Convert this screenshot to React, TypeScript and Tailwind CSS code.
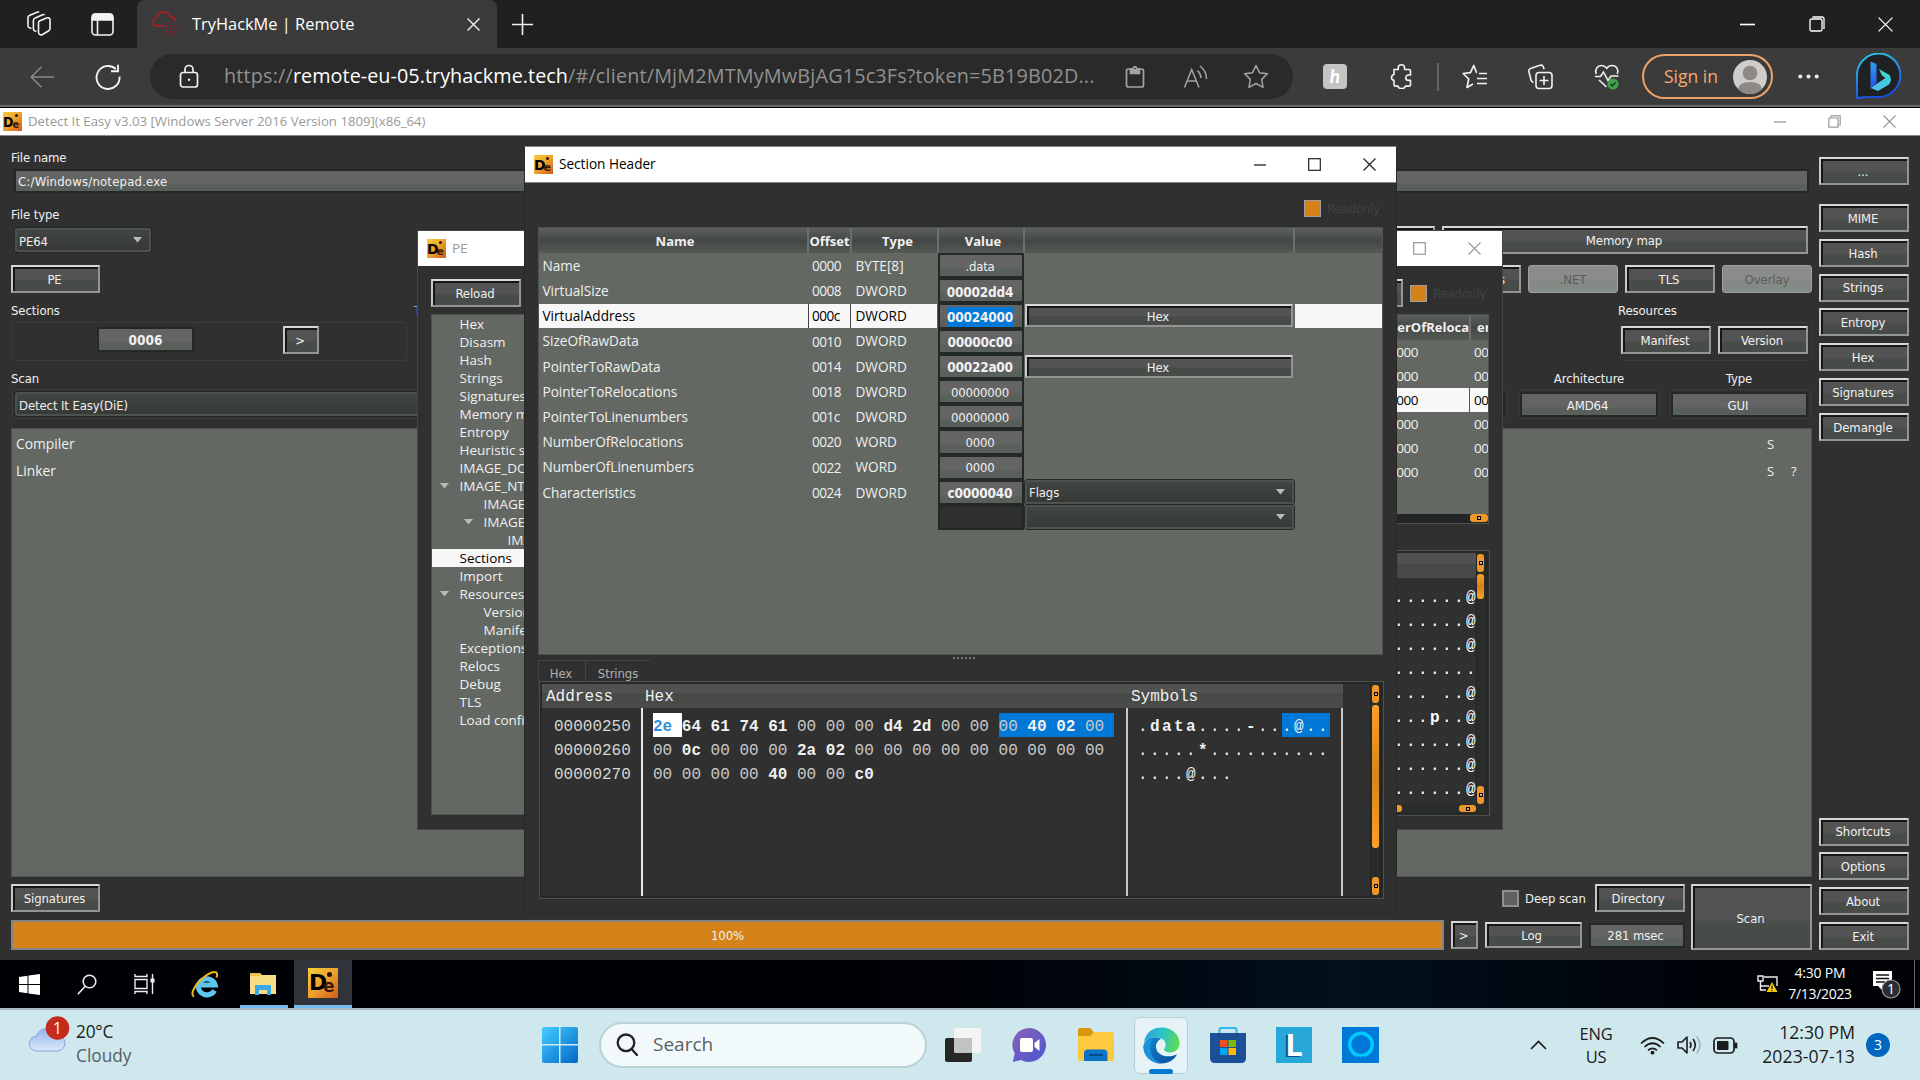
import React, { type ReactNode } from "react";

const TAHOMA = "font-['DejaVu_Sans_Condensed','DejaVu_Sans',sans-serif] [font-stretch:condensed] text-[13px] tracking-[-0.1px]";
const SEGOE = "font-['Open_Sans','Noto_Sans',sans-serif] [font-stretch:normal] tracking-[0px]";
const MONO = "font-['Liberation_Mono',monospace] text-[16px]";

function Btn({ children, className = "" }: { children?: ReactNode; className?: string }) {
  return (
    <div
      className={`${TAHOMA} flex shrink-0 items-center justify-center overflow-hidden border-2 border-t-[#d8d8d8] border-l-[#c8c8c8] border-r-[#949494] border-b-[#949494] bg-linear-to-b from-[#535353] from-50% to-[#484c49] to-60% pt-[1px] pr-[2px] text-[#f0f0f0] shadow-[inset_2px_2px_0_#161616] ${className}`}
    >
      {children}
    </div>
  );
}

function DisabledBtn({ children, className = "" }: { children?: ReactNode; className?: string }) {
  return (
    <div className={`${TAHOMA} flex shrink-0 items-center justify-center rounded-[3px] border border-[#a0a0a0] bg-linear-to-b from-[#8c8c8c] from-50% to-[#848a86] to-60% pt-[1px] text-[#5c5c5c] ${className}`}>
      {children}
    </div>
  );
}

function Field({ children, className = "" }: { children?: ReactNode; className?: string }) {
  return (
    <div className={`${TAHOMA} flex shrink-0 items-center border-2 border-[#232a26] bg-linear-to-b from-[#646464] from-55% to-[#59605b] to-70% pt-[2px] text-[#f0f0f0] ${className}`}>
      {children}
    </div>
  );
}

function Combo({ children, className = "" }: { children?: ReactNode; className?: string }) {
  return (
    <div className={`${TAHOMA} flex shrink-0 items-center justify-between rounded-[3px] border-2 border-[#4c524e] bg-linear-to-b from-[#424643] to-[#363936] px-[2px] text-[#f0f0f0] shadow-[0_0_0_1px_#252826] ${className}`}>
      <span className="pt-[3px]">{children}</span>
      <Triangle className="mr-[5px]" />
    </div>
  );
}

function Triangle({ className = "" }: { className?: string }) {
  return (
    <svg className={className} width="9" height="6" viewBox="0 0 9 6">
      <path d="M0 0h9L4.5 5.5z" fill="#b9bbb9" />
    </svg>
  );
}

function Group({ children, className = "" }: { children?: ReactNode; className?: string }) {
  return <div className={`flex shrink-0 rounded-[2px] border border-[#3a3c3a] ${className}`}>{children}</div>;
}

function DieIcon({ big = false }: { big?: boolean }) {
  return (
    <div className={`relative shrink-0 overflow-hidden bg-linear-to-br from-[#f4cf3a] via-[#eda12c] to-[#cf5a1c] ${big ? "h-[30px] w-[30px]" : "h-[19px] w-[19px]"}`}>
      <span className={`absolute font-['DejaVu_Sans',sans-serif] leading-none font-bold text-black ${big ? "top-[4px] left-[1px] text-[22px]" : "top-[3px] left-0 text-[14px]"}`}>D</span>
      <span className={`absolute font-['DejaVu_Sans',sans-serif] leading-none font-bold text-[#3a1606] ${big ? "top-[10px] left-[15px] text-[17px]" : "top-[7px] left-[9.5px] text-[11px]"}`}>e</span>
      <span className={`absolute rounded-full bg-[#2a1208] ${big ? "top-[4px] left-[19px] h-[5px] w-[5px]" : "top-[2px] left-[12px] h-[3px] w-[3px]"}`} />
    </div>
  );
}

function MinIcon({ color, size = 12 }: { color: string; size?: number }) {
  return (
    <svg width={size} height={size} viewBox="0 0 12 12">
      <path d="M0 6h12" stroke={color} strokeWidth="1.3" />
    </svg>
  );
}
function MaxIcon({ color, size = 13 }: { color: string; size?: number }) {
  return (
    <svg width={size} height={size} viewBox="0 0 13 13" fill="none">
      <rect x="0.7" y="0.7" width="11.6" height="11.6" stroke={color} strokeWidth="1.2" />
    </svg>
  );
}
function RestoreIcon({ color, size = 13 }: { color: string; size?: number }) {
  return (
    <svg width={size} height={size} viewBox="0 0 13 13" fill="none" stroke={color} strokeWidth="1.2">
      <path d="M.8 3h9.2v9.2H.8zM3 3V.8h9.2V10H10" />
    </svg>
  );
}
function CloseIcon({ color, size = 13, w = 1.2 }: { color: string; size?: number; w?: number }) {
  return (
    <svg width={size} height={size} viewBox="0 0 13 13">
      <path d="M.5.5l12 12M12.5.5l-12 12" stroke={color} strokeWidth={w} />
    </svg>
  );
}

function TabStrip() {
  return (
    <div className="flex h-[48px] items-center bg-[#202020]">
      <div className="flex w-[137px] items-center pl-[26px]">
        <svg width="26" height="26" viewBox="0 0 26 26" fill="none" stroke="#f2f2f2" strokeWidth="1.6" strokeLinejoin="round">
          <path d="M13.5 10 20.5 7q1.5-.6 2.500 0t1 2v8.500q0 1.500-1.300 2.200L16.500 23.500q-1.500.8-2.700.1T12.500 21.500V12q0-1.400 1-2z" />
          <path d="M10.500 20.200 9 20q-1.600-.5-1.600-2.200V9.500q0-1.600 1.300-2.200L16.500 3.800q1.200-.5 2.200 0" />
          <path d="M5.400 17.500 4 17q-2-.5-2-2.200V6.600q0-1.600 1.300-2.200L11 1.300q1.200-.5 2.200 0" />
        </svg>
        <svg className="ml-[39px]" width="23" height="23" viewBox="0 0 23 23" fill="none" stroke="#f2f2f2" strokeWidth="1.6">
          <rect x="1" y="1" width="21" height="21" rx="3.5" />
          <path d="M1.500 2.500Q2 1 4 1h15q2 0 2.500 1.500V7h-20z" fill="#f2f2f2" />
          <path d="M6.500 7v15" />
        </svg>
      </div>
      <div className={`${SEGOE} flex h-[48px] w-[360px] items-center rounded-t-[8px] bg-[#3b3b3b] pl-[15px] text-[16.4px] text-white`}>
        <svg width="27" height="26" viewBox="0 0 27 26" fill="none">
          <path d="M12 15H5.500C2.500 15 1 13 1 10.500S3 6.500 5 6.500C5.500 3 8 1 11.500 1S17 3 18 6c3-.4 5.500 1.500 5.500 4" stroke="#c4161c" strokeWidth="1.5" />
          <path d="M14 12h4m2 0h4M14 15h2m2 0h6M13 18h3m2 0h3m2 0h2M14 21h5m2 0h3M16 24h2m2 0h4" stroke="#8e1f24" strokeWidth="1.5" strokeDasharray="2 1" />
        </svg>
        <span className="ml-[13px] flex-1">TryHackMe | Remote</span>
        <span className="mr-[17px]"><CloseIcon color="#f2f2f2" w={1.4} /></span>
      </div>
      <svg className="ml-[15px]" width="21" height="21" viewBox="0 0 21 21">
        <path d="M10.500 0v21M0 10.500h21" stroke="#f2f2f2" strokeWidth="1.6" />
      </svg>
      <div className="flex-1" />
      <MinIcon color="#fff" size={15} />
      <svg className="ml-[54px]" width="16" height="16" viewBox="0 0 16 16" fill="none" stroke="#fff" strokeWidth="1.3">
        <rect x="1" y="3" width="12" height="12" rx="1.5" />
        <path d="M3.500 1h9.500q2 0 2 2v10" />
      </svg>
      <span className="mr-[27px] ml-[53px]"><CloseIcon color="#fff" size={15} w={1.1} /></span>
    </div>
  );
}

function Toolbar() {
  return (
    <div className={`${SEGOE} flex h-[57px] items-center bg-[#3b3b3b]`}>
      <svg className="ml-[30px]" width="24" height="22" viewBox="0 0 24 22" fill="none" stroke="#8a8a8a" strokeWidth="1.5">
        <path d="M11.500.8 1.200 11l10.300 10.200M1.200 11H24" />
      </svg>
      <svg className="ml-[41px]" width="26" height="26" viewBox="0 0 26 26" fill="none" stroke="#f2f2f2" strokeWidth="1.9">
        <path d="M24.500 12.500A11.500 11.500 0 1 1 20.800 5M16 7.300h7V.8" />
      </svg>
      <div className="ml-[29px] flex h-[45px] w-[1143px] items-center rounded-full bg-[#2a2a2a]">
        <svg className="ml-[29px]" width="20" height="25" viewBox="0 0 20 25" fill="none" stroke="#f2f2f2" strokeWidth="1.7">
          <rect x="1.5" y="8.5" width="17" height="14.5" rx="2.5" />
          <path d="M6 8.500V5.500a4 4 0 0 1 8 0v3" />
          <circle cx="10" cy="15.7" r="1.2" fill="#f2f2f2" stroke="none" />
        </svg>
        <span className="mb-[1px] ml-[25px] w-[880px] text-[19.8px] tracking-[0.18px] whitespace-nowrap text-[#919191]">
          https://<span className="tracking-[0.05px] text-white">remote-eu-05.tryhackme.tech</span>/#/client/MjM2MTMyMwBjAG15c3Fs?token=5B19B02D...
        </span>
        <svg className="ml-[21px]" width="20" height="22" viewBox="0 0 20 22" fill="none" stroke="#a3a3a3" strokeWidth="1.7">
          <rect x="1.5" y="3" width="17" height="18" rx="2" />
          <path d="M5.500 3h9v4.500h-9z" fill="#a3a3a3" />
          <circle cx="10" cy="2.5" r="1.7" fill="#2a2a2a" />
        </svg>
        <svg className="ml-[38px]" width="26" height="24" viewBox="0 0 26 24" fill="none" stroke="#a3a3a3" strokeWidth="1.5">
          <path d="M1.500 22.500 8.700 4.500 16 22.500M4.200 16h9M14.500 5.500q3.500 3.300 3.500 7.500M17 1q6.500 5 6.500 13" />
        </svg>
        <svg className="ml-[34px]" width="26" height="25" viewBox="0 0 26 25" fill="none" stroke="#a3a3a3" strokeWidth="1.5" strokeLinejoin="round">
          <path d="m13 1.500 3.500 7.200 7.900 1.100-5.700 5.600 1.300 7.900L13 19.500l-7 3.800 1.300-7.900L1.600 9.800l7.900-1.100z" />
        </svg>
      </div>
      <div className="ml-[30px] flex h-[25px] w-[24px] items-center justify-center rounded-[4px] bg-[#c4c4c4] font-['Lato',sans-serif] text-[19px] font-bold text-white italic">h</div>
      <svg className="ml-[43px]" width="22" height="25" viewBox="0 0 22 25" fill="none" stroke="#f2f2f2" strokeWidth="1.6" strokeLinejoin="round">
        <path d="M4 5.500h4.200V4a3.200 3.200 0 0 1 6.400 0v1.500h4.200q1.700 0 1.700 1.700V11H18.500a2.700 2.700 0 0 0 0 5.400h2v4q0 1.700-1.700 1.700h-3.500a3.700 3 0 0 1-7.300 0H5.700q-1.700 0-1.700-1.700v-4a3 3 0 0 1 0-5.900z" />
      </svg>
      <div className="ml-[25px] h-[28px] w-[2px] bg-[#666]" />
      <svg className="ml-[23px]" width="26" height="25" viewBox="0 0 26 25" fill="none" stroke="#f2f2f2" strokeWidth="1.7" strokeLinejoin="round">
        <path d="M15 8.500h-.5L11.700 1.500 8.500 8.700 1.200 9.500l5.500 5.500L5 23.500l6-3.500M17 9.500h8M15 14.500h10M15 19.500h10" />
      </svg>
      <svg className="ml-[40px]" width="25" height="26" viewBox="0 0 25 26" fill="none" stroke="#f2f2f2" strokeWidth="1.6">
        <rect x="8" y="8.5" width="16" height="16" rx="3" />
        <path d="M16 12v9M11.500 16.500h9M5.500 18.500Q3.500 18 3 16L.9 7.500q-.4-2.300 1.700-3L12 1.300q2.500-.7 3.300 1.500l.8 2.500" />
      </svg>
      <svg className="ml-[41px]" width="27" height="26" viewBox="0 0 27 26" fill="none" stroke="#f2f2f2" strokeWidth="1.6">
        <path d="M2.200 10C.5 5.500 3.500 1.500 7.500 1.500c2.500 0 4 1.200 5.200 2.800C14 2.500 15.700 1.500 18 1.500c4.500 0 7 4 5.300 8.500M5 16l7.500 7M1 12.500h5.500L9.500 8l4.500 8.500 3-4.500h7.500" />
        <circle cx="19" cy="20" r="5.5" fill="#3fa34d" stroke="none" />
        <path d="m16.500 20 1.800 1.900 3.300-3.500" stroke="#16351a" strokeWidth="1.4" />
      </svg>
      <div className="ml-[21px] flex h-[45px] w-[131px] items-center rounded-full border-2 border-[#efa265] pl-[20px] text-[17.5px] text-[#f5a76c]">
        <span className="w-[69px] whitespace-nowrap">Sign in</span>
        <svg width="34" height="34" viewBox="0 0 34 34">
          <circle cx="17" cy="17" r="17" fill="#cfcdcb" />
          <circle cx="17" cy="13" r="7.3" fill="#8b8886" />
          <path d="M5 29Q6 22 17 22t12 7a17 17 0 0 1-24 0z" fill="#8b8886" />
        </svg>
      </div>
      <svg className="ml-[25px]" width="21" height="5" viewBox="0 0 21 5" fill="#f2f2f2">
        <circle cx="2.3" cy="2.5" r="2" /><circle cx="10.5" cy="2.5" r="2" /><circle cx="18.7" cy="2.5" r="2" />
      </svg>
      <svg className="ml-[36px]" width="47" height="47" viewBox="0 0 47 47" fill="none">
        <defs>
          <linearGradient id="ring" x1="0" y1="0" x2=".3" y2="1"><stop offset="0" stopColor="#2fd0e8" /><stop offset="1" stopColor="#1b4fe0" /></linearGradient>
          <linearGradient id="stem" x1="0" y1="0" x2="0" y2="1"><stop offset="0" stopColor="#2f9df5" /><stop offset="1" stopColor="#2353e6" /></linearGradient>
          <linearGradient id="leaf" x1="1" y1="0" x2="0" y2="1"><stop offset="0" stopColor="#2fe0c8" /><stop offset="1" stopColor="#55b6f8" /></linearGradient>
        </defs>
        <path d="M2 45V23.500A21.700 21.700 0 1 1 23.500 44H17Q10 44 2 45z" fill="#202124" stroke="url(#ring)" strokeWidth="2" />
        <path d="M15.500 8.500l6 2.500v19l-6 5z" fill="url(#stem)" />
        <path d="M24 16l3 6.500 3.500 2.500-15 10 7.500 3 11-6.500q3.500-5 .5-9.500z" fill="url(#leaf)" />
      </svg>
    </div>
  );
}

const topTools = ["MIME", "Hash", "Strings", "Entropy", "Hex", "Signatures", "Demangle"];
const bottomTools = ["Shortcuts", "Options", "About", "Exit"];

function MainWindow() {
  return (
    <div className={`${TAHOMA} flex h-[852px] flex-col bg-[#303030] text-[#f0f0f0]`}>
      <div className="flex h-[28px] shrink-0 items-center border-b border-[#888] bg-white pl-[3px]">
        <DieIcon />
        <span className={`${SEGOE} ml-[6px] flex-1 pt-[1px] text-[13.2px] text-[#999]`}>Detect It Easy v3.03 [Windows Server 2016 Version 1809](x86_64)</span>
        <MinIcon color="#999" />
        <span className="ml-[42px]"><RestoreIcon color="#999" /></span>
        <span className="mr-[24px] ml-[42px]"><CloseIcon color="#999" /></span>
      </div>
      <div className="flex flex-1">
        <div className="flex w-[1819px] flex-col pt-[11px]">
          <div className="h-[20px] pl-[11px] leading-[21px]">File name</div>
          <Field className="mt-[2px] ml-[14px] h-[24px] w-[1795px] pl-[2px] tracking-[0.2px]!">C:/Windows/notepad.exe</Field>
          <div className="mt-[12px] h-[20px] pl-[11px] leading-[20px]">File type</div>
          <div className="mt-[1px] flex h-[28px] items-center justify-between pr-[11px] pl-[15px]">
            <Combo className="h-[24px] w-[136px]">PE64</Combo>
            <div className="flex gap-[7px]">
              <Btn className="h-[28px] w-[90px]" />
              <Btn className="h-[28px] w-[366px]">Memory map</Btn>
            </div>
          </div>
          <div className="mt-[11px] flex h-[28px] justify-between pr-[7px] pl-[11px]">
            <Btn className="w-[89px]">PE</Btn>
            <div className="flex gap-[7px]">
              <Btn className="w-[90px] justify-end! pr-[14px]!">Exports</Btn>
              <DisabledBtn className="w-[90px]">.NET</DisabledBtn>
              <Btn className="w-[90px]">TLS</Btn>
              <DisabledBtn className="w-[90px]">Overlay</DisabledBtn>
            </div>
          </div>
          <div className="mt-[8px] flex h-[20px] justify-between pl-[11px] leading-[20px]">
            <div className="flex w-[500px]">
              <span className="w-[403px]">Sections</span>
              <span className="text-[#6fb7e8]">TimeDateStamp</span>
            </div>
            <span className="w-[201px]">Resources</span>
          </div>
          <div className="mt-[1px] flex h-[39px] justify-between pr-[7px] pl-[12px]">
            <Group className="w-[395px] items-start pt-[4px]">
              <Field className="ml-[84px] h-[25px] w-[97px] justify-center text-[13.5px]! font-bold tracking-[0px]!">0006</Field>
              <Btn className="-mt-px ml-[89px] h-[28px] w-[36px]">&gt;</Btn>
            </Group>
            <Group className="w-[192px] gap-[7px] pt-[3px]">
              <Btn className="h-[28px] w-[90px]">Manifest</Btn>
              <Btn className="h-[28px] w-[90px]">Version</Btn>
            </Group>
          </div>
          <div className="mt-[8px] flex h-[20px] pl-[11px] leading-[20px]">
            <span className="flex-1">Scan</span>
            <span className="w-[150px] text-center">Architecture</span>
            <span className="mr-[5px] w-[150px] text-center">Type</span>
          </div>
          <div className="mt-[1px] flex h-[28px] items-center pl-[12px]">
            <Group className="h-[30px] w-[1350px] items-center pl-[2px]">
              <Combo className="h-[24px] w-[1340px]">Detect It Easy(DiE)</Combo>
            </Group>
            <Group className="ml-[20px] h-[30px] w-[126px] items-center justify-end pr-[2px]">
              <Field className="h-[25px] w-[115px]" />
            </Group>
            <Group className="ml-[10px] h-[30px] w-[142px] items-center justify-center">
              <Field className="h-[25px] w-[138px] justify-center pt-[3px] pr-[3px]">AMD64</Field>
            </Group>
            <Group className="ml-[10px] h-[30px] w-[141px] items-center">
              <Field className="h-[25px] w-[137px] justify-center pt-[3px] pr-[3px]">GUI</Field>
            </Group>
          </div>
          <div className="mt-[10px] ml-[11px] h-[449px] w-[1801px] border border-[#4c524e] bg-[#636863] pt-[1px] pl-[4px]">
            <div className={`${SEGOE} flex h-[27.5px] items-center pt-[1px] text-[13.8px]`}>
              <span className="flex-1">Compiler</span>
              <span className="w-[44px] text-[13px]">S</span>
            </div>
            <div className={`${SEGOE} flex h-[27.5px] items-center pt-[1px] text-[13.8px]`}>
              <span className="flex-1">Linker</span>
              <span className="w-[24px] text-[13px]">S</span>
              <span className="w-[20px] text-[13px]">?</span>
            </div>
          </div>
          <div className="mt-[7px] flex h-[66px] pl-[11px]">
            <div className="flex w-[1433px] flex-col justify-between">
              <Btn className="h-[28px] w-[89px]">Signatures</Btn>
              <div className="flex h-[30px] items-center justify-center border-2 border-[#858585] bg-[#d58318] pt-[1px]">100%</div>
            </div>
            <div className="ml-[7px] flex w-[234px] flex-col justify-between">
              <div className="flex h-[28px] items-center">
                <div className="ml-[51px] h-[17px] w-[17px] border-2 border-[#8f8f8f] bg-[#5f625f]" />
                <span className="ml-[6px] flex-1 pt-[2px] whitespace-nowrap">Deep scan</span>
                <Btn className="h-[28px] w-[90px] pr-[4px]!">Directory</Btn>
              </div>
              <div className="flex h-[30px] items-center gap-[7px]">
                <Btn className="h-[28px] w-[27px]">&gt;</Btn>
                <Btn className="h-[26px] w-[97px] pr-[4px]!">Log</Btn>
                <Field className="h-[25px] w-[96px] justify-center pr-[3px]">281 msec</Field>
              </div>
            </div>
            <Btn className="ml-[6px] w-[121px] pt-[3px]">Scan</Btn>
          </div>
        </div>
        <div className="flex w-[90px] flex-col pt-[21px]">
          <Btn className="h-[28px]">...</Btn>
          <div className="mt-[19px] flex flex-col gap-[6.8px]">
            {topTools.map((t) => (
              <Btn key={t} className="h-[28px]">{t}</Btn>
            ))}
          </div>
          <div className="mt-auto mb-[10px] flex flex-col gap-[6.8px]">
            {bottomTools.map((t) => (
              <Btn key={t} className="h-[28px]">{t}</Btn>
            ))}
          </div>
        </div>
      </div>
    </div>
  );
}

type Node = { t: string; l: number; open?: boolean; sel?: boolean };
const tree: Node[] = [
  { t: "Hex", l: 0 }, { t: "Disasm", l: 0 }, { t: "Hash", l: 0 }, { t: "Strings", l: 0 }, { t: "Signatures", l: 0 },
  { t: "Memory map", l: 0 }, { t: "Entropy", l: 0 }, { t: "Heuristic scan", l: 0 }, { t: "IMAGE_DOS", l: 0 },
  { t: "IMAGE_NT", l: 0, open: true }, { t: "IMAGE_F", l: 1 }, { t: "IMAGE_O", l: 1, open: true },
  { t: "IMAGE_D", l: 2 }, { t: "Sections", l: 0, sel: true }, { t: "Import", l: 0 }, { t: "Resources", l: 0, open: true },
  { t: "Version", l: 1 }, { t: "Manifest", l: 1 }, { t: "Exceptions", l: 0 }, { t: "Relocs", l: 0 }, { t: "Debug", l: 0 },
  { t: "TLS", l: 0 }, { t: "Load config", l: 0 },
];
const indent = ["w-[27.5px]", "w-[51.5px]", "w-[75.5px]"];

function Knob({ className = "" }: { className?: string }) {
  return (
    <div className={`flex shrink-0 items-center justify-center rounded-[3px] bg-[#f0962a] ${className}`}>
      <div className="h-[4px] w-[4px] border border-black bg-[#c8b090]" />
    </div>
  );
}

const peSymbols = ["......@", "......@", "......@", ".......", "... ..@", "...p..@", "......@", "......@", "......@"];

function PeWindow() {
  return (
    <div className="absolute top-[230px] left-[417px] flex h-[600px] w-[1086px] flex-col border border-[#454545] bg-[#303030] text-[#f0f0f0]">
      <div className="flex h-[35px] shrink-0 items-center bg-white pl-[9px]">
        <DieIcon />
        <span className={`${SEGOE} ml-[6px] flex-1 text-[13.5px] text-[#999]`}>PE</span>
        <MaxIcon color="#999" />
        <span className="mr-[21px] ml-[42px]"><CloseIcon color="#999" /></span>
      </div>
      <div className="mt-[13px] flex h-[28px] items-center pl-[13px]">
        <Btn className="h-[28px] w-[90px] pt-[2px]">Reload</Btn>
        <div className="flex-1" />
        <Btn className="h-[28px] w-[90px]" />
        <div className="ml-[7px] h-[17px] w-[17px] border border-[#a0a0a0] bg-[#d58318]" />
        <span className={`${TAHOMA} mr-[14px] ml-[6px] w-[55px] pt-[2px] text-[#3f433f]`}>Readonly</span>
      </div>
      <div className="mt-[7px] flex h-[501px] pl-[13px]">
        <div className={`${SEGOE} w-[260px] overflow-hidden border border-[#4c524e] bg-[#636863] text-[13.5px]`}>
          {tree.map((n, i) => (
            <div key={i} className={`flex h-[18px] items-center leading-[18px] whitespace-nowrap ${n.sel ? "bg-[#f7f7f7] text-black" : ""}`}>
              <span className={`${indent[n.l]} flex justify-end`}>{n.open && <Triangle className="mr-[11px]" />}</span>
              {n.t}
            </div>
          ))}
        </div>
        <div className="ml-[6px] flex w-[792px] flex-col">
          <div className="flex h-[210px] flex-col overflow-hidden border border-[#4c524e] bg-[#636863]">
            <div className={`${SEGOE} flex h-[25px] shrink-0 items-center justify-end bg-linear-to-b from-[#5b5f5c] via-[#454846] to-[#565a57] pt-[1px] text-[13px] font-bold`}>
              <span className="flex h-[25px] w-[150px] items-center justify-end overflow-hidden border-r-2 border-[#6b706c]">NumberOfReloca</span>
              <span className="w-[17px] overflow-hidden pl-[6px]">er</span>
            </div>
            {[0, 1, 2, 3, 4, 5].map((i) => (
              <div key={i} className={`${SEGOE} flex h-[24px] shrink-0 items-center justify-end text-[13.5px] tracking-[-0.5px]! ${i === 2 ? "bg-[#f7f7f7] text-black" : ""}`}>
                <span className={`flex h-[24px] w-[81px] items-center border-r ${i === 2 ? "border-[#555]" : "border-transparent"}`}>0000</span>
                <span className="w-[18px] overflow-hidden pl-[4px]">0000</span>
              </div>
            ))}
            <div className="mt-auto flex h-[9px] justify-end bg-[#232524]"><Knob className="h-[8px] w-[18px]" /></div>
          </div>
          <div className="mt-[27px] flex h-[264px] flex-col border-2 border-[#262926] bg-[#303030] outline outline-[#4c524e]">
            <div className="flex h-[251px] justify-end">
              <div className="flex flex-1 flex-col items-end">
                <div className="h-[25px] w-full shrink-0 bg-linear-to-b from-[#515151] from-40% via-[#464a46] via-45% to-[#484a48]" />
                <div className={`${MONO} mt-[8px] w-[82px] text-white`}>
                  {peSymbols.map((s, i) => (
                    <div key={i} className="flex h-[24px] leading-[24px] whitespace-pre">
                      {s.split("").map((c, x) => (
                        <span key={x} className={`w-[12px] shrink-0 ${c === "p" ? "font-bold" : ""}`}>{c}</span>
                      ))}
                    </div>
                  ))}
                </div>
              </div>
              <div className="flex w-[11px] flex-col items-start border-x border-[#232524] bg-[#2a2c2a] pt-[1px]">
                <Knob className="h-[18px] w-[7px]" />
                <div className="mt-[2px] h-[25px] w-[7px] rounded-[3px] bg-linear-to-b from-[#ff9f2a] via-[#d58318] to-[#ff9f2a]" />
                <Knob className="mt-auto h-[18px] w-[7px]" />
              </div>
            </div>
            <div className="flex h-[9px] items-center justify-end bg-[#2a2c2a] pr-[11px]">
              <div className="mr-[57px] h-[7px] w-[40px] rounded-[3px] bg-[#f0962a]" />
              <Knob className="h-[7px] w-[17px]" />
            </div>
          </div>
        </div>
      </div>
    </div>
  );
}

type Row = { n: string; o: string; t: string; v: string; kind?: "hex" | "flags" | "empty"; sel?: boolean };
const rows: Row[] = [
  { n: "Name", o: "0000", t: "BYTE[8]", v: ".data" },
  { n: "VirtualSize", o: "0008", t: "DWORD", v: "00002dd4" },
  { n: "VirtualAddress", o: "000c", t: "DWORD", v: "00024000", kind: "hex", sel: true },
  { n: "SizeOfRawData", o: "0010", t: "DWORD", v: "00000c00" },
  { n: "PointerToRawData", o: "0014", t: "DWORD", v: "00022a00", kind: "hex" },
  { n: "PointerToRelocations", o: "0018", t: "DWORD", v: "00000000" },
  { n: "PointerToLinenumbers", o: "001c", t: "DWORD", v: "00000000" },
  { n: "NumberOfRelocations", o: "0020", t: "WORD", v: "0000" },
  { n: "NumberOfLinenumbers", o: "0022", t: "WORD", v: "0000" },
  { n: "Characteristics", o: "0024", t: "DWORD", v: "c0000040", kind: "flags" },
  { n: "", o: "", t: "", v: "", kind: "empty" },
];
const isBold = (v: string) => v.length > 0 && v !== ".data" && !/^0+$/.test(v);

const hexRows = [
  { a: "00000250", b: "2e 64 61 74 61 00 00 00 d4 2d 00 00 00 40 02 00", s: ".data....-...@.." },
  { a: "00000260", b: "00 0c 00 00 00 2a 02 00 00 00 00 00 00 00 00 00", s: ".....*.........." },
  { a: "00000270", b: "00 00 00 00 40 00 00 c0", s: "....@..." },
];

function HexView() {
  return (
    <div className={`${MONO} flex h-[216px] border-2 border-[#262926] text-[#f0f0f0] outline outline-[#4c524e]`}>
      <div className="flex w-[801px] flex-col">
        <div className="flex h-[24px] shrink-0 items-center bg-linear-to-b from-[#515151] from-35% via-[#464a46] via-40% to-[#4a4b4a] pt-[1px] pl-[4px]">
          <span className="w-[99px]">Address</span>
          <span className="w-[486px]">Hex</span>
          <span>Symbols</span>
        </div>
        <div className="flex flex-1">
          <div className="w-[101px] border-r-2 border-[#e8e8e8] pt-[5px] pl-[12px]">
            {hexRows.map((r) => (
              <div key={r.a} className="h-[24px] leading-[29px] text-[#d6d6d6]">{r.a}</div>
            ))}
          </div>
          <div className="w-[485px] border-r-2 border-[#c8c8c8] pt-[5px] pl-[10px]">
            {hexRows.map((r, y) => (
              <div key={r.a} className="flex h-[24px] leading-[29px]">
                {r.b.split(" ").map((b, x) => (
                  <span
                    key={x}
                    className={`h-[24px] w-[28.8px] ${b !== "00" ? "font-bold" : "text-[#c9c9c9]"} ${y === 0 && x === 0 ? "bg-white text-[#2f8fdc]" : ""} ${y === 0 && x > 11 ? "bg-[#0078d7]" : ""}`}
                  >
                    {b}
                  </span>
                ))}
              </div>
            ))}
          </div>
          <div className="flex-1 border-r-2 border-[#c8c8c8] pt-[5px] pl-[10px]">
            {hexRows.map((r, y) => (
              <div key={r.a} className="flex h-[24px] leading-[29px]">
                {r.s.split("").map((c, x) => (
                  <span key={x} className={`h-[24px] w-[12px] ${c !== "." && c !== "@" ? "font-bold" : ""} ${y === 0 && x > 11 ? "bg-[#0078d7]" : ""}`}>
                    {c}
                  </span>
                ))}
              </div>
            ))}
          </div>
        </div>
      </div>
      <div className="flex-1" />
      <div className="flex w-[11px] flex-col items-center border-x border-[#232524] bg-[#2a2c2a] py-[1px]">
        <Knob className="h-[18px] w-[7px]" />
        <div className="mt-[2px] h-[143px] w-[7px] rounded-[3px] bg-linear-to-b from-[#ff9f2a] via-[#d58318] to-[#ff9f2a]" />
        <Knob className="mt-auto h-[18px] w-[7px]" />
      </div>
    </div>
  );
}

function SectionHeaderWindow() {
  return (
    <div className="absolute top-[146px] left-[524px] flex h-[768px] w-[873px] flex-col border border-t-[#888] border-r-[#292929] border-b-[#292929] border-l-[#292929] bg-[#303030] text-[#f0f0f0]">
      <div className={`${SEGOE} flex h-[36px] shrink-0 items-center border-b border-[#888] bg-white pl-[9px] text-[13.6px] text-black`}>
        <DieIcon />
        <span className="ml-[6px] flex-1">Section Header</span>
        <MinIcon color="#222" />
        <span className="ml-[42px]"><MaxIcon color="#222" /></span>
        <span className="mr-[20px] ml-[42px]"><CloseIcon color="#222" /></span>
      </div>
      <div className="mt-[16px] flex h-[18px] items-center justify-end">
        <div className="h-[17px] w-[17px] border border-[#a0a0a0] bg-[#d58318]" />
        <span className={`${TAHOMA} mr-[14px] ml-[6px] w-[55px] pt-[2px] text-[#3f433f]`}>Readonly</span>
      </div>
      <div className={`${SEGOE} mt-[10px] mr-[13px] ml-[13px] h-[428px] shrink-0 border border-[#4c524e] bg-[#636863] text-[13.6px]`}>
        <div className="flex h-[25px] text-[13px] font-bold [&>div]:flex [&>div]:items-center [&>div]:justify-center [&>div]:overflow-hidden [&>div]:border-r-2 [&>div]:border-[#6b706c] [&>div]:bg-linear-to-b [&>div]:from-[#5d615e] [&>div]:via-[#444745] [&>div]:to-[#565a57]">
          <div className="w-[270px] pt-[2px] pl-[4px]">Name</div>
          <div className="w-[43px] pt-[2px]">Offset</div>
          <div className="w-[87px] pt-[2px] pl-[6px]">Type</div>
          <div className="w-[86px] pt-[2px] pl-[4px]">Value</div>
          <div className="w-[270px]" />
          <div className="flex-1 border-r-0!" />
        </div>
        {rows.map((r, i) => (
          <div key={i} className={`flex h-[25.2px] ${r.sel ? "text-black" : ""}`}>
            <div className={`mr-px flex w-[398px] items-center ${r.sel ? "my-[0.5px] bg-[#f7f7f7]" : ""}`}>
              <span className="w-[269px] shrink-0 pt-[1px] pl-[3.5px]">{r.n}</span>
              <span className={`w-[43px] shrink-0 pl-[3px] leading-[25px] tracking-[-0.5px] ${r.sel ? "border-x border-[#444]" : "border-x border-transparent"}`}>{r.o}</span>
              <span className="pt-[1px] pl-[4.5px]">{r.t}</span>
            </div>
            <Field className={`mr-px w-[86px] justify-center pr-[2px] tracking-[-0.2px]! ${isBold(r.v) ? "text-[13.5px]! font-bold" : ""} ${r.kind === "empty" ? "bg-[#303030] bg-none" : ""}`}>
              {r.sel ? <span className="bg-[#0078d7]">{r.v}</span> : r.v}
            </Field>
            <div className="w-[269px]">
              {r.kind === "hex" && <Btn className="mt-px h-[23px] w-[268px] pt-[2px]">Hex</Btn>}
              {r.kind === "flags" && <Combo className="h-[24px]">Flags</Combo>}
              {r.kind === "empty" && <Combo className="h-[24px]" />}
            </div>
            {r.sel && <div className="my-[0.5px] ml-px flex-1 bg-[#f7f7f7]" />}
          </div>
        ))}
      </div>
      <div className="mt-[1px] flex h-[4px] shrink-0 items-center gap-[2px] pl-[428px]">
        {[0, 1, 2, 3, 4, 5].map((i) => (
          <div key={i} className="h-[2px] w-[2px] bg-[#777]" />
        ))}
      </div>
      <div className={`${TAHOMA} ml-[13px] flex h-[22px] shrink-0 text-[#b0b0b0]`}>
        <div className="flex w-[48px] items-center justify-center border-t border-r border-l border-[#444] pt-[4px] pr-[2px]">Hex</div>
        <div className="flex w-[64px] items-center justify-center border-t border-[#444] pt-[4px]">Strings</div>
      </div>
      <div className="mr-[13px] ml-[15px]">
        <HexView />
      </div>
    </div>
  );
}

function RemoteTaskbar() {
  return (
    <div className="flex h-[48px] items-center bg-linear-to-r from-[#000104] from-45% via-[#02111c] via-70% to-[#000206] to-92%">
      <svg className="ml-[19px]" width="21" height="21" viewBox="0 0 21 21" fill="#fff">
        <path d="M0 3 8.500 1.800V10H0zM9.500 1.600 21 0v10H9.500zM0 11h8.500v8.200L0 18zM9.500 11H21v10L9.500 19.400z" />
      </svg>
      <svg className="ml-[37px]" width="20" height="21" viewBox="0 0 20 21" fill="none" stroke="#eee" strokeWidth="1.6">
        <circle cx="12.5" cy="7.5" r="6.3" />
        <path d="M8 12.500.8 20.300" />
      </svg>
      <svg className="ml-[37px]" width="21" height="20" viewBox="0 0 21 20" fill="none" stroke="#eee" strokeWidth="1.4">
        <path d="M1 0v2.500h12V0M1 20v-2.500h12V20M1 5.500h12v9H1zM18.500 0v20" />
        <path d="M16.500 4.500h4v4h-4z" fill="#eee" stroke="none" />
      </svg>
      <svg className="ml-[35px]" width="30" height="28" viewBox="0 0 30 28" fill="none">
        <path d="M25.300 19.500a8.500 8 0 1 1 .7-5.500H11.500" transform="translate(-.8 1)" stroke="#5cc8f2" strokeWidth="5" />
        <path d="M4 26.500C0 25 4 16 11 9.500S25.500 0 27 3.500q.5 1.500-.5 4" stroke="#e9b81c" strokeWidth="2" />
      </svg>
      <svg className="ml-[30px]" width="27" height="24" viewBox="0 0 27 24">
        <path d="M0 1h10l2 2h14v19H0z" fill="#f8dd84" />
        <path d="M0 1h10l1 3H0z" fill="#eec04c" />
        <path d="M5 23V13h16v10h-4v-5H9v5z" fill="#3ba9e6" />
      </svg>
      <div className="ml-[17px] flex h-[48px] w-[58px] items-center justify-center border-b-3 border-[#76b9ed] bg-[#30343a]">
        <DieIcon big />
      </div>
      <div className="flex-1" />
      <svg className="mr-[2px]" width="22" height="18" viewBox="0 0 22 18" fill="none" stroke="#eee" strokeWidth="1.4">
        <path d="M7 2h13v9M1 1h5v5H1zM3.500 6v9H9M12 11H3.500" />
        <path d="m15 7 5.500 10h-11z" fill="#f2c811" stroke="none" />
        <path d="M15 10.500v3.500m0 1v1.200" stroke="#222" strokeWidth="1.3" />
      </svg>
      <div className={`${SEGOE} mb-[3px] ml-[7px] flex w-[64px] flex-col items-center text-[14px] leading-[21px] text-white`}>
        <span className="tracking-[-0.2px]">4:30 PM</span>
        <span className="tracking-[-0.3px]">7/13/2023</span>
      </div>
      <svg className="ml-[20px]" width="32" height="32" viewBox="0 0 32 32" fill="none">
        <path d="M1 3h19v15h-9v5l-5-5H1z" fill="#fff" />
        <path d="M4 7h13M4 10.500h13M4 14h9" stroke="#111" strokeWidth="1.3" />
        <circle cx="19" cy="21" r="9" fill="#2b2d30" stroke="#999" strokeWidth="1.2" />
        <text x="19" y="26" fill="#fff" fontSize="14" textAnchor="middle" fontFamily="Open Sans">1</text>
      </svg>
      <div className="mr-[5px] ml-[10px] h-[48px] w-[1px] bg-[#666]" />
      <div className="absolute top-[1005px] left-[240px] h-[3px] w-[48px] bg-[#76b9ed]" />
    </div>
  );
}

function HostTaskbar() {
  return (
    <div className={`${SEGOE} flex h-[72px] items-center border-t-2 border-[#a9b9be] bg-[#cfe8ee] text-[17.3px] text-[#1c1c1c]`}>
      <svg className="ml-[28px]" width="44" height="60" viewBox="0 0 44 60">
        <defs>
          <linearGradient id="cl" x1="0" y1="0" x2="0" y2="1"><stop offset="0" stopColor="#8fb3ee" /><stop offset="1" stopColor="#dfe9fb" /></linearGradient>
        </defs>
        <path d="M9 36a7.500 7.500 0 0 1-.5-15A11 11 0 0 1 29 20a8 8 0 0 1 0 16z" fill="url(#cl)" stroke="#86a5e6" strokeWidth="1" />
        <circle cx="29.5" cy="13" r="11.8" fill="#c42b1c" />
        <text x="29.5" y="18.5" fill="#fff" fontSize="15.5" textAnchor="middle" fontFamily="Open Sans">1</text>
      </svg>
      <div className="mb-[2px] ml-[4px] flex w-[466px] flex-col leading-[24px]">
        <span className="tracking-[-0.2px]">20°C</span>
        <span className="text-[#555f63]">Cloudy</span>
      </div>
      <svg width="36" height="36" viewBox="0 0 36 36">
        <defs>
          <linearGradient id="win" x1="0" y1="0" x2="1" y2="1"><stop offset="0" stopColor="#45cdff" /><stop offset="1" stopColor="#0067c8" /></linearGradient>
        </defs>
        <path d="M2 0h15v17H0V2q0-2 2-2zM18.500 0H34q2 0 2 2v15H18.500zM0 18.500h17V36H2q-2 0-2-2zM18.500 18.500H36V34q0 2-2 2H18.500z" fill="url(#win)" />
      </svg>
      <div className="ml-[21px] flex h-[46px] w-[328px] items-center rounded-full border-2 border-[#b9d2d9] bg-[#f1f9fb] pl-[15px] text-[19px] text-[#5b5f61]">
        <svg width="23" height="24" viewBox="0 0 23 24" fill="none" stroke="#222" strokeWidth="2.3" strokeLinecap="round">
          <circle cx="10" cy="9.8" r="8.3" />
          <path d="m15.500 16 5.500 6" />
        </svg>
        <span className="mb-[1px] ml-[14px]">Search</span>
      </div>
      <svg className="ml-[18px]" width="36" height="36" viewBox="0 0 36 36">
        <rect x="0" y="11" width="27" height="24" rx="2" fill="#262626" />
        <rect x="9" y="1" width="27" height="25" rx="2" fill="#f4f4f4" />
        <path d="M9 11h18v15H11q-2 0-2-2z" fill="#c1c3c3" />
      </svg>
      <svg className="ml-[31px]" width="35" height="36" viewBox="0 0 35 36">
        <defs>
          <linearGradient id="chat" x1="0" y1="0" x2=".8" y2="1"><stop offset="0" stopColor="#8a63b5" /><stop offset="1" stopColor="#4f57cf" /></linearGradient>
        </defs>
        <path d="M17.500 1A17 17 0 1 1 9 33L.8 35l1.900-8.500A17 17 0 0 1 17.500 1z" fill="url(#chat)" />
        <rect x="8" y="11" width="13" height="14" rx="2" fill="#fff" />
        <path d="m22.500 16 5-4v12l-5-4z" fill="#fff" />
      </svg>
      <svg className="ml-[31px]" width="37" height="34" viewBox="0 0 37 34">
        <path d="M0 2q0-2 2-2h9q2 0 3 2l2 3-3 5H0z" fill="#d9970a" />
        <path d="M0 8h12l4-4h18q2 0 2 2v25q0 2-2 2H2q-2 0-2-2z" fill="#fdc93f" />
        <path d="M6 33v-8q0-3.500 3.500-3.500h16q4 0 4 3.500v8z" fill="#0b74c9" />
        <path d="M11 27h14" stroke="#064a86" strokeWidth="2" />
      </svg>
      <div className="ml-[19px] flex h-[57px] w-[54px] flex-col items-center rounded-[6px] border border-[#b9d0d6] bg-[#e5f2f6] pt-[9px]">
        <svg width="37" height="37" viewBox="0 0 37 37" className="shrink-0">
          <defs>
            <linearGradient id="eg" x1="0" y1=".3" x2="1" y2=".5"><stop offset="0" stopColor="#2aa5dc" /><stop offset=".5" stopColor="#2cc3c4" /><stop offset="1" stopColor="#5fdc54" /></linearGradient>
            <linearGradient id="eb" x1="0" y1="0" x2="1" y2="1"><stop offset="0" stopColor="#1286cf" /><stop offset="1" stopColor="#0b4f9e" /></linearGradient>
          </defs>
          <path d="M1 15C3 5 10 .5 18.500.5 29 .5 36.500 8 36.500 16c0 6-4.500 9.500-9 9.500-4 0-6.500-1.500-6.500-3 0-1 1.700-2 1.700-5 0-4-4-7-8.700-7Q6 10.500 1 15z" fill="url(#eg)" />
          <path d="M14 10.500C6 10 .5 14 .5 20c0 9 8 16.500 18 16.500 7 0 13-4 15.500-9-13 5-21-1-21-8 0-4 2.500-6.500 5-7.500q-2-1.300-4-1.500z" fill="url(#eb)" />
          <path d="M10 12c-5 8-3 20 8 24.500-9 0-17.500-7.500-17.500-16C.5 15 5 12 10 12z" fill="#1a93db" />
        </svg>
        <div className="mt-[5px] h-[5px] w-[24px] shrink-0 rounded-full bg-[#0078d4]" />
      </div>
      <svg className="ml-[22px]" width="36" height="36" viewBox="0 0 36 36">
        <path d="M9.500 7V3q0-2 2-2h13q2 0 2 2v4" fill="none" stroke="#31b6f0" strokeWidth="2" />
        <path d="M0 6h36v25q0 5-5 5H5q-5 0-5-5z" fill="#1c4f96" />
        <path d="M10 13h7.500v7H10z" fill="#f25022" /><path d="M18.500 13H26v7h-7.500z" fill="#7fba00" />
        <path d="M10 21h7.500v7H10z" fill="#00a4ef" /><path d="M18.500 21H26v7h-7.500z" fill="#ffb900" />
      </svg>
      <div className="ml-[30px] flex h-[36px] w-[36px] items-center justify-center bg-[#27a8d8] pb-[1px] text-[31px] leading-none font-bold text-white [text-shadow:-2px_1px_0_#0c4f8c]">L</div>
      <div className="ml-[30px] flex h-[36px] w-[37px] items-center justify-center bg-[#0078d7]">
        <svg width="28" height="30" viewBox="0 0 28 30" fill="none" stroke="#00caff">
          <circle cx="14" cy="14.5" r="11.3" strokeWidth="3.4" />
          <path d="M11 26q3 1.500 6 0v3h-6z" fill="#0078d7" stroke="none" />
        </svg>
      </div>
      <div className="flex-1" />
      <svg width="17" height="10" viewBox="0 0 17 10" fill="none" stroke="#1c1c1c" strokeWidth="1.7"><path d="m1 9 7.500-7.500L16 9" /></svg>
      <div className="mb-[1px] ml-[26px] flex w-[46px] flex-col items-center text-[16.5px] leading-[23px] tracking-[-0.2px]">
        <span>ENG</span>
        <span>US</span>
      </div>
      <svg className="ml-[21px]" width="25" height="19" viewBox="0 0 25 19" fill="none" stroke="#1c1c1c" strokeWidth="1.7">
        <path d="M1 7.500q11.500-11 23 0M4.500 11q8-7.500 16 0M8 14.300q4.500-4 9 0" />
        <circle cx="12.5" cy="16.7" r="1.9" fill="#1c1c1c" stroke="none" />
      </svg>
      <svg className="ml-[12px]" width="25" height="20" viewBox="0 0 25 20" fill="none" stroke="#1c1c1c" strokeWidth="1.6" strokeLinejoin="round">
        <path d="M1 7h4l5-5v16l-5-5H1zM13 7q2 3 0 6M16 4q4.500 6 0 12" />
        <path d="M19.500 1.500q7 8.500 0 17" stroke="#a3b4b9" />
      </svg>
      <svg className="ml-[11px]" width="25" height="17" viewBox="0 0 25 17" fill="none" stroke="#1c1c1c" strokeWidth="1.7">
        <rect x="1" y="1" width="20" height="15" rx="3.5" />
        <rect x="4" y="4" width="11.5" height="9" rx="1" fill="#1c1c1c" stroke="none" />
        <path d="M22 6.500h1.500v4H22z" fill="#1c1c1c" />
      </svg>
      <div className="mb-[2px] ml-[17px] flex w-[100px] flex-col items-end text-[17.6px] leading-[24px] whitespace-nowrap">
        <span>12:30 PM</span>
        <span className="tracking-[0.1px]">2023-07-13</span>
      </div>
      <div className="mr-[30px] ml-[11px] flex h-[24px] w-[24px] items-center justify-center rounded-full bg-[#0067c0] pb-[1px] text-[14px] text-white">3</div>
    </div>
  );
}

export default function App() {
  return (
    <div className="relative flex h-[1080px] w-[1920px] flex-col overflow-hidden bg-[#303030]">
      <TabStrip />
      <Toolbar />
      <div className="h-[3px] shrink-0 border-b border-black bg-[#6b6b6b]" />
      <MainWindow />
      <RemoteTaskbar />
      <HostTaskbar />
      <PeWindow />
      <SectionHeaderWindow />
    </div>
  );
}
